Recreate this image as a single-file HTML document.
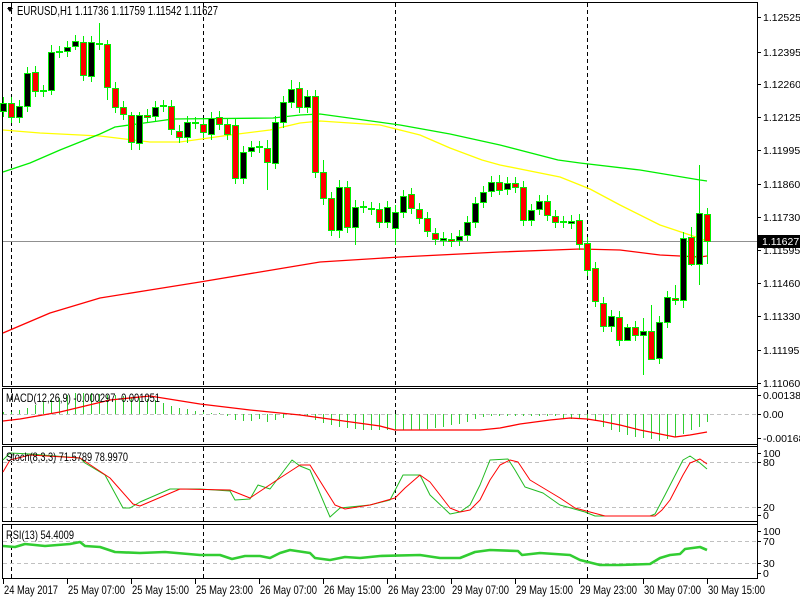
<!DOCTYPE html>
<html><head><meta charset="utf-8"><style>
html,body{margin:0;padding:0;background:#fff;width:800px;height:600px;overflow:hidden}
svg{display:block;font-family:"Liberation Sans",sans-serif}
</style></head><body>
<svg id="s" width="800" height="600" xmlns="http://www.w3.org/2000/svg" shape-rendering="crispEdges">
<rect width="800" height="600" fill="#fff"/>
</svg>
<script>
const S=document.getElementById('s');
function el(t,a,txt){const e=document.createElementNS('http://www.w3.org/2000/svg',t);for(const k in a)e.setAttribute(k,a[k]);if(txt!==undefined)e.textContent=txt;S.appendChild(e);return e;}
function pl(pts,col,w,dash){el('polyline',{points:pts.map(p=>p.join(',')).join(' '),fill:'none',stroke:col,'stroke-width':w||1,'stroke-dasharray':dash||'none','shape-rendering':'auto','stroke-linejoin':'round'});}
const panels=[[2,2,386],[2,388,444],[2,446,521],[2,524,578]];
panels.forEach(p=>el('rect',{x:2.5,y:p[1]+.5,width:755,height:p[2]-p[1],fill:'none',stroke:'#000'}));
[11,203,395,587].forEach(x=>panels.forEach(p=>el('line',{x1:x+.5,y1:p[1]+1,x2:x+.5,y2:p[2],stroke:'#000','stroke-dasharray':'4,3'})));
[[414],[462],[507],[541],[563]].forEach(l=>el('line',{x1:3,y1:l[0]+.5,x2:757,y2:l[0]+.5,stroke:'#c0c0c0','stroke-dasharray':'4,3'}));
pl([[3,333],[50,313],[100,298],[150,290],[200,282],[260,272],[320,262],[400,257],[500,252],[580,249],[620,250],[660,255],[700,257],[707,256]],'#ff0000',1.3);
pl([[3,130],[40,133],[100,136],[150,142],[180,142],[230,135],[270,130],[300,123],[320,121],[380,125],[420,135],[450,148],[482,160],[500,165],[560,177],[590,189],[620,205],[660,225],[690,235],[707,241]],'#ffff00',1.3);
pl([[3,172],[30,163],[60,150],[100,134],[115,127],[173,119],[273,118],[300,115],[320,114],[400,125],[450,134],[500,145],[558,160],[580,163],[640,170],[700,180],[707,181]],'#00ee00',1.3);
el('line',{x1:3,y1:241.5,x2:757,y2:241.5,stroke:'#909090'});
const C=[[111,103],[103,117],[117,106],[106,73],[72,91],[91,91],[90,52],[52,52],[51,47],[46,41],[42,75],[76,42],[43,44],[44,87],[88,107],[107,114],[115,142],[143,115],[115,117],[116,107],[106,106],[106,129],[131,137],[137,122],[123,123],[124,132],[134,118],[117,124],[124,134],[125,178],[178,152],[151,147],[147,147],[148,162],[163,122],[122,102],[102,89],[88,107],[107,96],[96,172],
[172,198],[198,230],[230,187],[187,227],[227,207],[207,207],[208,209],[209,222],[222,207],[228,212],[212,196],[194,208],[209,218],[218,231],[233,239],[240,238],[239,241],[240,236],[235,222],[222,203],[202,192],[191,182],[182,190],[189,183],[183,187],[187,220],[220,210],[209,201],[201,215],[216,222],[222,222],[223,221],[220,244],
[243,270],[268,301],[303,326],[326,316],[317,340],[340,327],[327,335],[335,331],[331,359],[358,322],[322,297],[298,300],[300,238],[237,264],[264,213],[214,241]];
const ov={12:[23,50],6:[45,95],9:[35,50],13:[40,100],16:[112,150],17:[112,150],36:[80,108],84:[285,305],85:[232,308],86:[227,266],87:[165,285],88:[208,264],80:[318,375],78:[324,340],81:[305,340],40:[160,205],42:[180,238],44:[200,245],54:[228,245],62:[175,195],33:[140,190],49:[205,245]};
C.forEach((c,i)=>{const x=3+8*i;let t=Math.min(c[0],c[1]),b=Math.max(c[0],c[1]);let hi=t-6,lo=b+6;if(ov[i]){hi=ov[i][0];lo=ov[i][1];}
el('line',{x1:x+.5,y1:hi,x2:x+.5,y2:lo,stroke:'#00ee00'});
const bull=c[1]<c[0];const h=Math.max(b-t,1);
if(c[0]==c[1]) el('rect',{x:x-3,y:t-1,width:7,height:2,fill:'#00ee00'});
else el('rect',{x:x-2.5,y:t+.5,width:6,height:h,fill:bull?'#000':'#ff0000',stroke:'#00ee00'});});
const ax=[[17,'1.12525'],[52,'1.12395'],[84,'1.12260'],[117,'1.12125'],[150,'1.11995'],[184,'1.11860'],[217,'1.11730'],[250,'1.11595'],[283,'1.11460'],[316,'1.11330'],[350,'1.11195'],[383,'1.11060']];
el('line',{x1:757.5,y1:2,x2:757.5,y2:579,stroke:'#000'});
ax.forEach(a=>{el('line',{x1:757,y1:a[0]+.5,x2:761,y2:a[0]+.5,stroke:'#000'});el('text',{x:763,y:a[0]+4,'font-size':10.5,fill:'#000'},a[1]);});
el('rect',{x:758,y:235,width:42,height:13,fill:'#000'});
el('text',{x:762,y:245,'font-size':10.5,fill:'#fff'},'1.11627');
[[395,'0.001381'],[414,'0.00'],[438,'-0.001686'],[453,'100'],[462,'80'],[507,'20'],[515,'0'],[531,'100'],[541,'70'],[563,'30'],[573,'0']].forEach(a=>{el('line',{x1:757,y1:a[0]+.5,x2:761,y2:a[0]+.5,stroke:'#000'});el('text',{x:763,y:a[0]+4,'font-size':10.5,fill:'#000'},a[1]);});
const HB=[412,412,410,408,405,402,400,398,395,393,393,393,394,395,395,396,397,398,399,400,403,406,408,409,411,412,413,413,416,420,421,421,419,422,420,418,415,415,416,420,423,425,427,428,429,430,430,430,430,430,430,430,430,429,428,427,425,424,422,419,417,416,416,416,416,416,416,416,416,416,419,419,419,419,421,427,430,432,435,437,438,439,441,439,437,434,430,427,422,418];
HB.forEach((v,i)=>{const x=3+8*i;if(x>710)return;el('line',{x1:x+.5,y1:414,x2:x+.5,y2:v,stroke:'#32cd32'});});
pl([[3,421],[20,419],[60,412],[110,400],[150,396],[200,404],[250,410],[300,415],[380,426],[395,430],[480,430],[500,428],[520,424],[550,420],[570,418],[587,419],[600,421],[620,425],[640,430],[660,434],[675,437],[690,435],[707,432]],'#ff0000',1.3);
pl([[3,460],[10,453],[30,454],[80,458],[85,463],[105,475],[123,508],[130,508],[140,502],[170,489],[200,489],[230,491],[235,500],[250,499],[258,485],[270,489],[292,460],[300,466],[310,470],[330,517],[340,508],[370,505],[390,500],[403,475],[420,475],[430,495],[450,514],[460,512],[470,505],[480,485],[490,460],[508,459],[515,470],[525,487],[543,493],[560,505],[585,512],[595,516],[650,516],[655,514],[665,495],[683,460],[690,456],[700,463],[707,469]],'#22bb22',1);
pl([[3,472],[10,460],[30,455],[80,458],[110,478],[133,504],[140,506],[180,489],[230,490],[250,498],[280,478],[300,465],[310,465],[335,505],[345,509],[370,505],[395,498],[405,488],[420,475],[430,482],[450,508],[460,512],[470,510],[480,500],[490,480],[500,465],[510,460],[518,462],[530,480],[560,498],[575,508],[590,512],[605,516],[655,516],[662,510],[670,500],[683,475],[690,463],[700,459],[707,464]],'#ff0000',1);
pl([[3,546],[15,547],[25,544],[45,546],[70,544],[80,542],[85,546],[100,547],[115,552],[140,553],[165,552],[200,555],[220,555],[232,559],[245,556],[260,556],[270,558],[280,553],[290,550],[310,553],[315,558],[330,560],[345,557],[360,558],[380,556],[420,555],[440,558],[460,558],[475,552],[490,550],[518,551],[522,555],[540,553],[570,555],[580,560],[600,565],[620,565],[650,564],[660,558],[670,555],[680,554],[685,549],[700,547],[707,550]],'#32cd32',2.6);
el('path',{d:'M7 8 L13 8 L10 12 Z',fill:'#000','shape-rendering':'auto'});
el('line',{x1:8,y1:7.5,x2:12,y2:7.5,stroke:'#000'});
el('text',{x:17,y:15,'font-size':12.5,textLength:201,lengthAdjust:'spacingAndGlyphs'},'EURUSD,H1 1.11736 1.11759 1.11542 1.11627');
el('text',{x:6,y:402,'font-size':12,textLength:154,lengthAdjust:'spacingAndGlyphs'},'MACD(12,26,9) -0.000297 -0.001051');
el('text',{x:6,y:461,'font-size':12,textLength:122,lengthAdjust:'spacingAndGlyphs'},'Stoch(8,3,3) 71.5789 78.9970');
el('text',{x:6,y:539,'font-size':12,textLength:68,lengthAdjust:'spacingAndGlyphs'},'RSI(13) 54.4009');
const TL=['24 May 2017','25 May 07:00','25 May 15:00','25 May 23:00','26 May 07:00','26 May 15:00','26 May 23:00','29 May 07:00','29 May 15:00','29 May 23:00','30 May 07:00','30 May 15:00'];
TL.forEach((t,i)=>{const x=3+64*i;el('line',{x1:x+.5,y1:579,x2:x+.5,y2:584,stroke:'#000'});el('text',{x:x+1,y:594,'font-size':12,textLength:i==0?54:57,lengthAdjust:'spacingAndGlyphs'},t);});
</script>
</body></html>
